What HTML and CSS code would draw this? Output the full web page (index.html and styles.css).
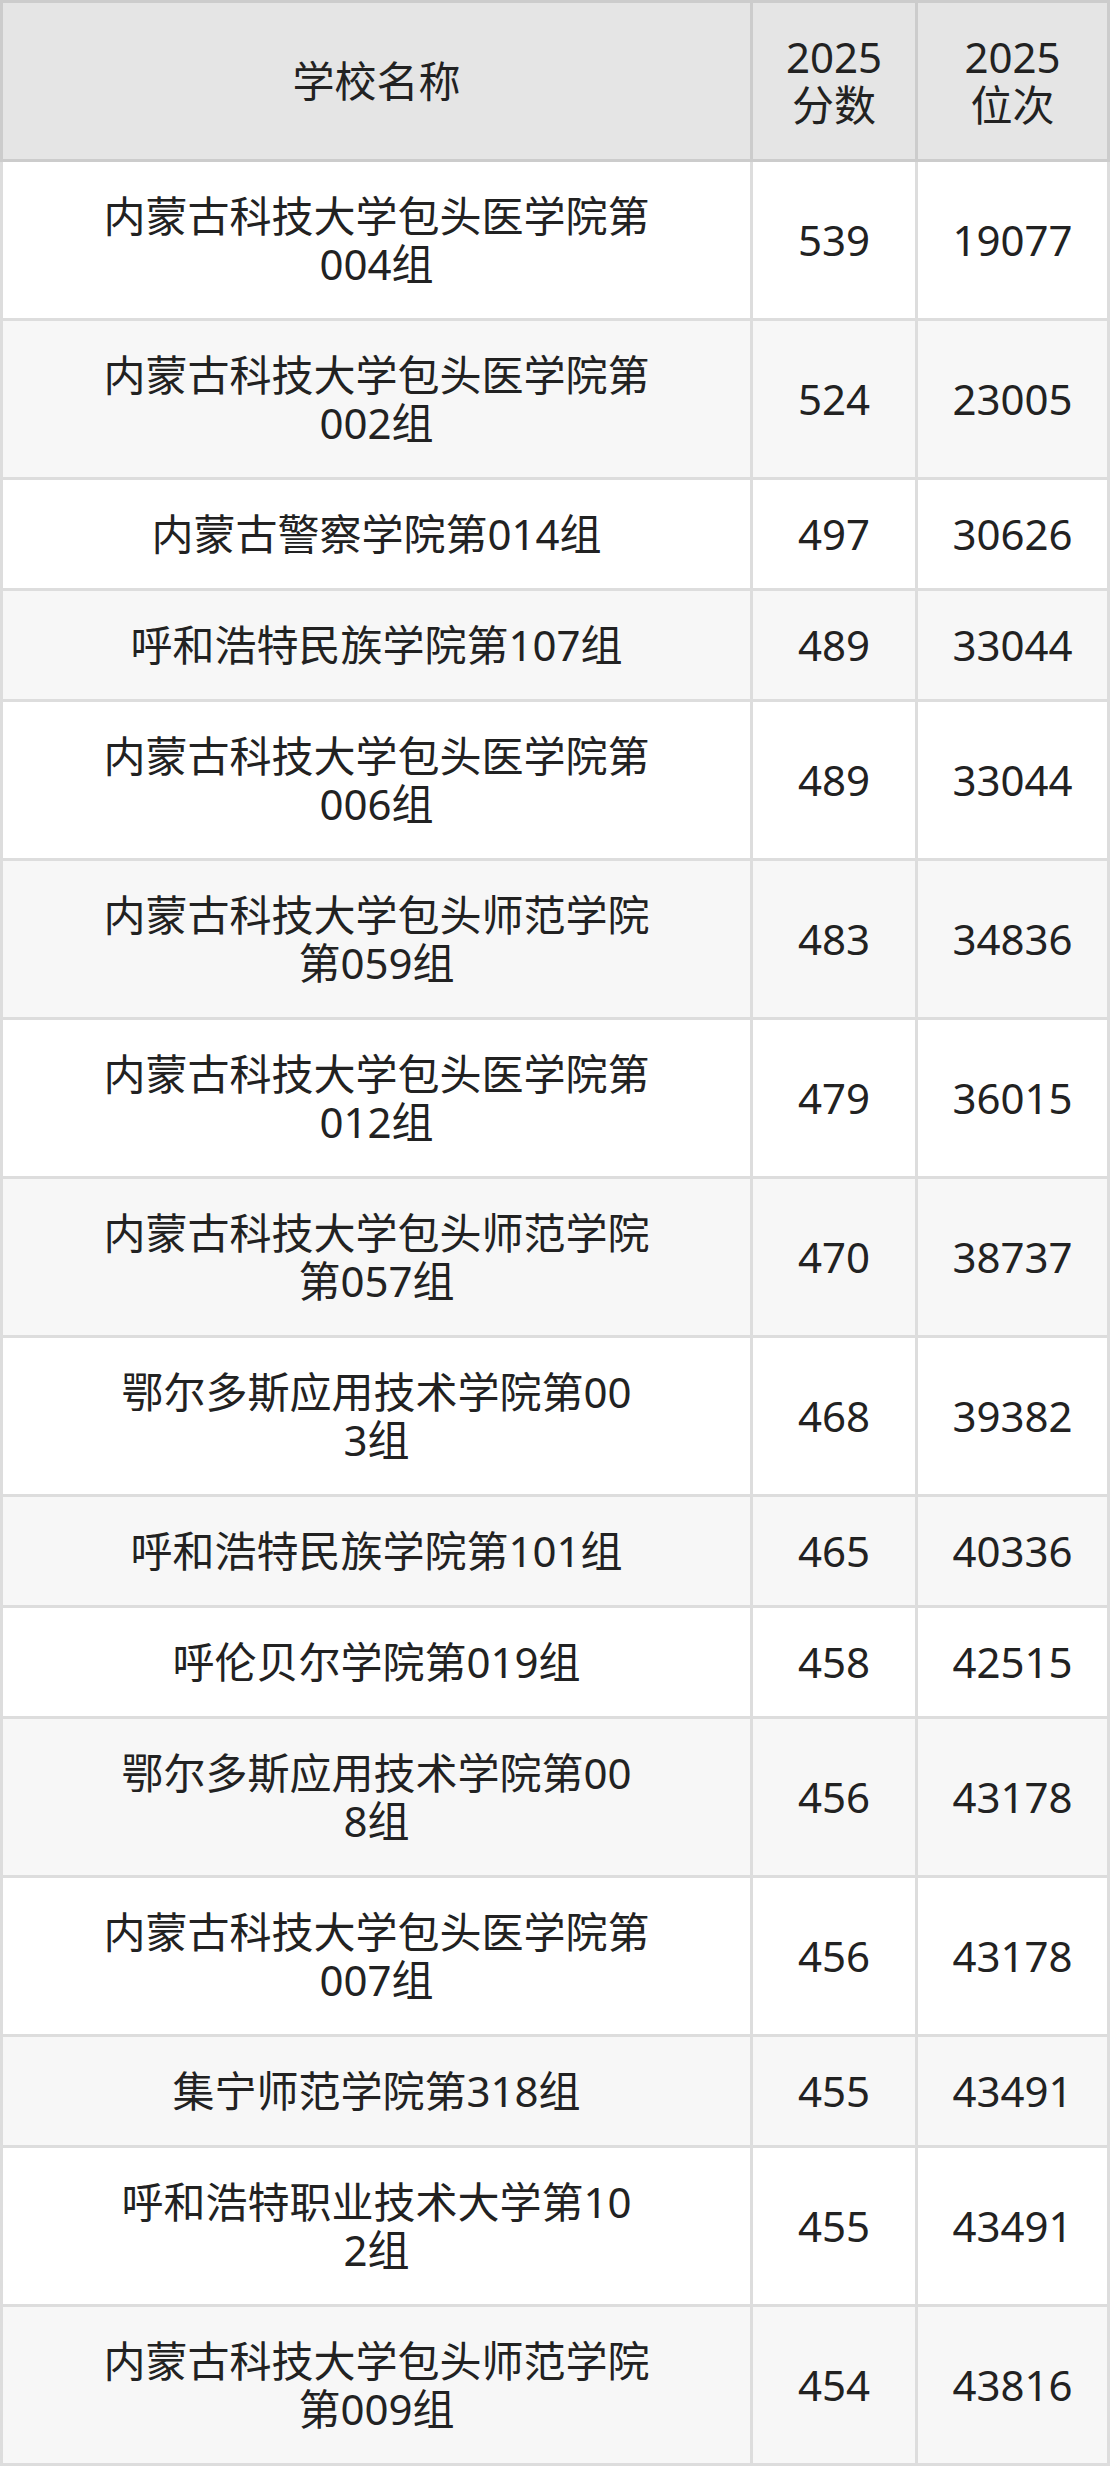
FILE: index.html
```html
<!DOCTYPE html>
<html lang="zh-CN">
<head>
<meta charset="utf-8">
<title>2025 分数位次</title>
<link rel="stylesheet" href="styles.css">
</head>
<body>
<div class="table">
  <div class="row head">
    <div class="cell name">学校名称</div>
    <div class="cell">2025<br>分数</div>
    <div class="cell">2025<br>位次</div>
  </div>
  <div class="row">
    <div class="cell name">内蒙古科技大学包头医学院第<br>004组</div>
    <div class="cell">539</div>
    <div class="cell">19077</div>
  </div>
  <div class="row alt">
    <div class="cell name">内蒙古科技大学包头医学院第<br>002组</div>
    <div class="cell">524</div>
    <div class="cell">23005</div>
  </div>
  <div class="row">
    <div class="cell name">内蒙古警察学院第014组</div>
    <div class="cell">497</div>
    <div class="cell">30626</div>
  </div>
  <div class="row alt">
    <div class="cell name">呼和浩特民族学院第107组</div>
    <div class="cell">489</div>
    <div class="cell">33044</div>
  </div>
  <div class="row">
    <div class="cell name">内蒙古科技大学包头医学院第<br>006组</div>
    <div class="cell">489</div>
    <div class="cell">33044</div>
  </div>
  <div class="row alt">
    <div class="cell name">内蒙古科技大学包头师范学院<br>第059组</div>
    <div class="cell">483</div>
    <div class="cell">34836</div>
  </div>
  <div class="row">
    <div class="cell name">内蒙古科技大学包头医学院第<br>012组</div>
    <div class="cell">479</div>
    <div class="cell">36015</div>
  </div>
  <div class="row alt">
    <div class="cell name">内蒙古科技大学包头师范学院<br>第057组</div>
    <div class="cell">470</div>
    <div class="cell">38737</div>
  </div>
  <div class="row">
    <div class="cell name">鄂尔多斯应用技术学院第00<br>3组</div>
    <div class="cell">468</div>
    <div class="cell">39382</div>
  </div>
  <div class="row alt">
    <div class="cell name">呼和浩特民族学院第101组</div>
    <div class="cell">465</div>
    <div class="cell">40336</div>
  </div>
  <div class="row">
    <div class="cell name">呼伦贝尔学院第019组</div>
    <div class="cell">458</div>
    <div class="cell">42515</div>
  </div>
  <div class="row alt">
    <div class="cell name">鄂尔多斯应用技术学院第00<br>8组</div>
    <div class="cell">456</div>
    <div class="cell">43178</div>
  </div>
  <div class="row">
    <div class="cell name">内蒙古科技大学包头医学院第<br>007组</div>
    <div class="cell">456</div>
    <div class="cell">43178</div>
  </div>
  <div class="row alt">
    <div class="cell name">集宁师范学院第318组</div>
    <div class="cell">455</div>
    <div class="cell">43491</div>
  </div>
  <div class="row">
    <div class="cell name">呼和浩特职业技术大学第10<br>2组</div>
    <div class="cell">455</div>
    <div class="cell">43491</div>
  </div>
  <div class="row alt">
    <div class="cell name">内蒙古科技大学包头师范学院<br>第009组</div>
    <div class="cell">454</div>
    <div class="cell">43816</div>
  </div>
</div>
</body>
</html>
```

FILE: styles.css
```css
html, body {
  margin: 0;
  padding: 0;
  background: #ffffff;
}

body {
  font-family: "Noto Sans", "Noto Sans CJK SC", sans-serif;
  color: #222222;
}

.table {
  width: 1110px;
  display: flex;
  flex-direction: column;
}

.row {
  display: grid;
  grid-template-columns: 753px 165px 192px;
  background: #ffffff;
}

.row.alt {
  background: #f7f7f7;
}

.cell {
  box-sizing: border-box;
  display: flex;
  align-items: center;
  justify-content: center;
  text-align: center;
  padding: 30px 6px;
  font-size: 42px;
  line-height: 48px;
  border-right: 3px solid #dddddd;
  border-bottom: 3px solid #dddddd;
}

.cell.name {
  border-left: 3px solid #dddddd;
}

.head {
  background: #e5e5e5;
}

.head .cell {
  border-color: #cccccc;
  border-top: 3px solid #cccccc;
}
```
